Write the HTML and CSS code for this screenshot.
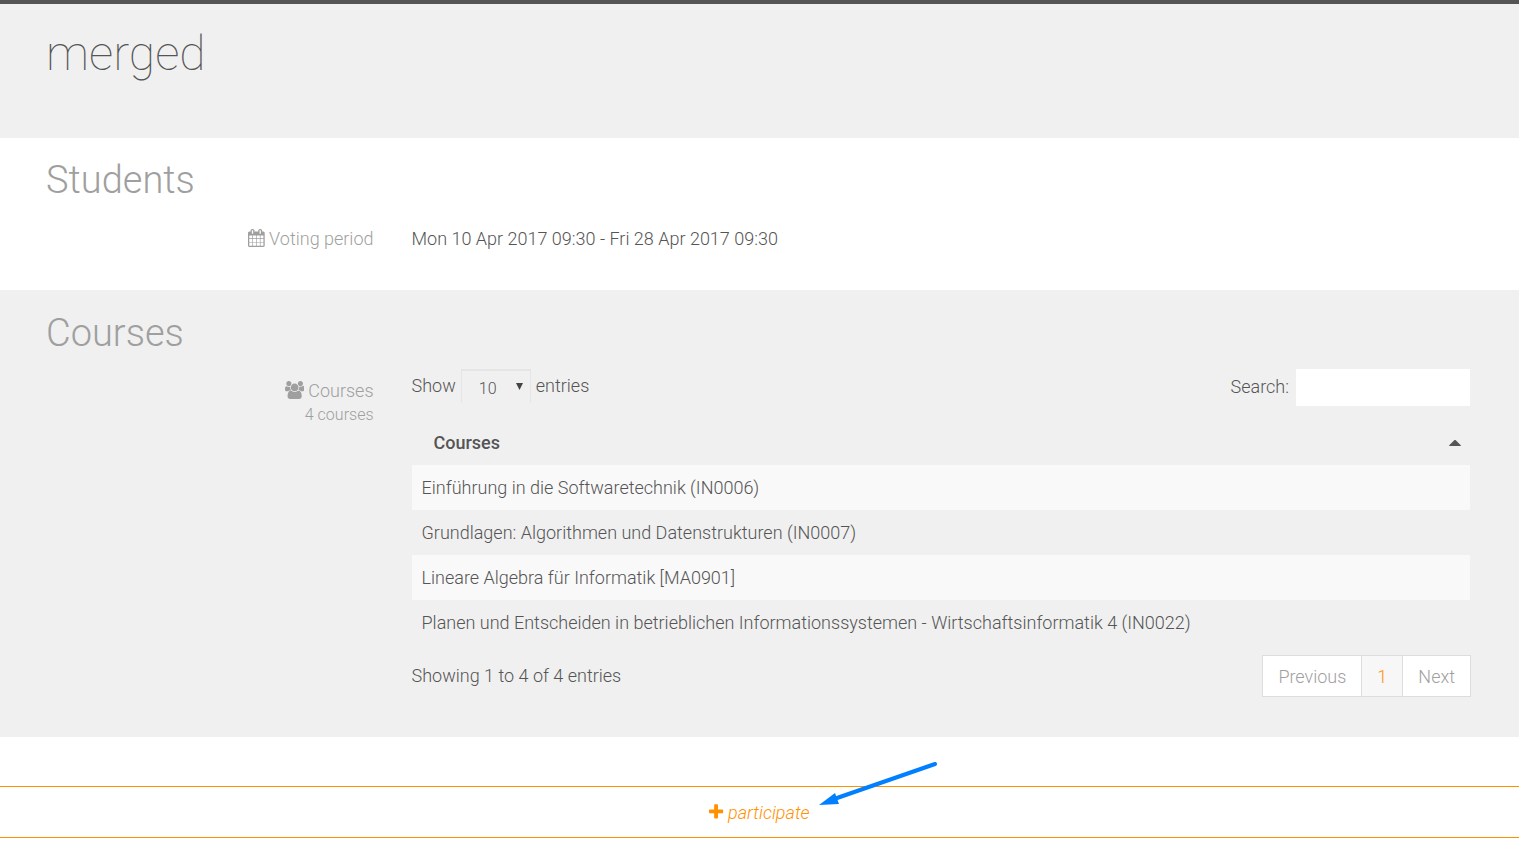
FILE: index.html
```html
<!DOCTYPE html>
<html lang="en">
<head>
<meta charset="utf-8">
<title>merged</title>
<link rel="stylesheet" href="styles.css">
</head>
<body>
<header class="masthead"><h1 class="title">merged</h1></header>
<main>
<section class="section students">
  <h2 class="heading">Students</h2>
  <div class="row">
    <div class="label"><svg class="icon cal" viewBox="64 0 1664 1792" aria-hidden="true"><path d="M192 1664h288v-288h-288v288zm352 0h320v-288h-320v288zm-352-352h288v-320h-288v320zm352 0h320v-320h-320v320zm-352-384h288v-288h-288v288zm736 736h320v-288h-320v288zm-384-736h320v-288h-320v288zm768 736h288v-288h-288v288zm-384-352h320v-320h-320v320zm-352-864v-288q0-13-9.500-22.500t-22.500-9.500h-64q-13 0-22.500 9.500t-9.500 22.500v288q0 13 9.500 22.500t22.500 9.500h64q13 0 22.500-9.500t9.500-22.500zm736 864h288v-320h-288v320zm-384-384h320v-288h-320v288zm384 0h288v-288h-288v288zm32-480v-288q0-13-9.500-22.500t-22.500-9.500h-64q-13 0-22.500 9.500t-9.500 22.500v288q0 13 9.500 22.500t22.500 9.500h64q13 0 22.500-9.500t9.500-22.500zm384-64v1280q0 52-38 90t-90 38h-1408q-52 0-90-38t-38-90v-1280q0-52 38-90t90-38h128v-96q0-66 47-113t113-47h64q66 0 113 47t47 113v96h384v-96q0-66 47-113t113-47h64q66 0 113 47t47 113v96h128q52 0 90 38t38 90z"/></svg> Voting period</div>
    <div class="value">Mon 10 Apr 2017 09:30 - Fri 28 Apr 2017 09:30</div>
  </div>
</section>
<section class="section courses">
  <h2 class="heading">Courses</h2>
  <div class="row">
    <div class="label label-courses"><svg class="icon users" viewBox="64 0 1920 1792" aria-hidden="true"><path d="M657 896q-162 5-265 128h-134q-82 0-138-40.500t-56-118.500q0-353 124-353 6 0 43.500 21t97.500 42.500 119 21.500q67 0 133-23-5 37-5 66 0 159 93 286zm1071 637q0 120-73 189.500t-194 69.500h-874q-121 0-194-69.500t-73-189.500q0-53 3.500-103.500t14-109 26.500-108.500 43-97.500 62-81 85.500-53.500 111.500-20q10 0 43 21.500t73 48 107 48 135 21.500 135-21.500 107-48 73-48 43-21.500q61 0 111.500 20t85.500 53.500 62 81 43 97.500 26.500 108.500 14 109 3.500 103.500zm-1024-1277q0 106-75 181t-181 75-181-75-75-181 75-181 181-75 181 75 75 181zm704 384q0 159-112.500 271.500t-271.500 112.500-271.500-112.500-112.500-271.500 112.500-271.500 271.500-112.500 271.500 112.500 112.500 271.500zm576 225q0 78-56 118.500t-138 40.500h-134q-103-123-265-128 93-127 93-286 0-29-5-66 66 23 133 23 59 0 119-21.500t97.500-42.500 43.500-21q124 0 124 353zm-128-609q0 106-75 181t-181 75-181-75-75-181 75-181 181-75 181 75 75 181z"/></svg> Courses<small class="count">4 courses</small></div>
    <div class="value">
      <div class="toolbar">
        <label class="length">Show
          <span class="select-wrap"><select class="select"><option>10</option><option>25</option><option>50</option></select><svg class="caret" viewBox="0 0 7 7" aria-hidden="true"><path d="M0 0h7L3.500 7z"/></svg></span>
          entries</label>
        <label class="search">Search: <input class="search-box" type="search"></label>
      </div>
      <table class="table">
        <thead><tr><th scope="col"><div class="sort">Courses <svg class="sort-icon" viewBox="0 0 12 6" aria-hidden="true"><path d="M.5 6L0 5.500L5.500 0h1L12 5.500L11.500 6z"/></svg></div></th></tr></thead>
        <tbody>
          <tr><td>Einführung in die Softwaretechnik (IN0006)</td></tr>
          <tr><td>Grundlagen: Algorithmen und Datenstrukturen (IN0007)</td></tr>
          <tr><td>Lineare Algebra für Informatik [MA0901]</td></tr>
          <tr><td>Planen und Entscheiden in betrieblichen Informationssystemen - Wirtschaftsinformatik 4 (IN0022)</td></tr>
        </tbody>
      </table>
      <div class="footer">
        <div class="info">Showing 1 to 4 of 4 entries</div>
        <nav class="pager" aria-label="Pages"><a class="page" href="#">Previous</a><a class="page current" href="#">1</a><a class="page" href="#">Next</a></nav>
      </div>
    </div>
  </div>
</section>
<div class="action">
  <a class="participate" href="#"><svg class="icon plus" viewBox="192 0 1408 1792" aria-hidden="true"><path d="M1600 736v192q0 40-28 68t-68 28h-416v416q0 40-28 68t-68 28h-192q-40 0-68-28t-28-68v-416h-416q-40 0-68-28t-28-68v-192q0-40 28-68t68-28h416v-416q0-40 28-68t68-28h192q40 0 68 28t28 68v416h416q40 0 68 28t28 68z"/></svg> <em>participate</em></a>
  <svg class="arrow" viewBox="0 0 120 46" aria-hidden="true"><path d="M116 4L18 38" fill="none" stroke="#0080ff" stroke-width="4" stroke-linecap="round"/><path d="M0 45L16 33L20 44z" fill="#0080ff"/></svg>
</div>
</main>
</body>
</html>
```
FILE: styles.css
```css
* { box-sizing: border-box; }
body {
  margin: 0;
  background: #fff;
  color: #555;
  font: 300 18px/24px Roboto, sans-serif;
}
h1, h2 { margin: 0; }
a { text-decoration: none; }
.masthead {
  border-top: 4px solid #555;
  background: #f0f0f0;
  padding: 22px 46px 56px;
}
.title { font-size: 48px; line-height: 56px; font-weight: 100; }
.section { padding: 20px 49px 40px 46px; }
.students { padding-bottom: 39px; }
.courses { background: #f0f0f0; padding-top: 21px; }
.heading {
  font-size: 38px;
  line-height: 44px;
  font-weight: 300;
  color: #9f9f9f;
  margin-bottom: 14px;
}
.students .heading { margin-bottom: 25px; }
.row {
  display: grid;
  grid-template-columns: 23% 1fr;
  column-gap: 38px;
}
.label { color: #9f9f9f; text-align: right; }
.label-courses { padding-top: 10px; }
.count { display: block; font-size: 16px; }
.icon { height: 18px; fill: currentColor; vertical-align: -2px; }
.toolbar, .footer { display: flex; justify-content: space-between; }
.toolbar { height: 52px; }
.length, .search { display: flex; align-items: center; height: 36px; gap: 5px; }
.length { height: 34px; }
.search { gap: 7px; }
.select-wrap { position: relative; display: flex; }
.select {
  appearance: none;
  width: 70px;
  height: 34px;
  padding: 4px 17px 0;
  border: 1px solid #e5e5e5;
  border-width: 2px 1px 0;
  background: transparent;
  color: #555;
  font: 300 16px/24px Roboto, sans-serif;
}
.caret { position: absolute; right: 8px; top: 14px; width: 7px; height: 7px; fill: #444; pointer-events: none; }
.search-box {
  width: 174px;
  height: 37px;
  border: 0;
  padding: 6px 12px;
  background: #fff;
  font: 300 16px/24px Roboto, sans-serif;
}
.table { width: 100%; border-collapse: collapse; }
.table th { padding: 10px 9px 10px 22px; font-weight: 500; text-align: left; }
.sort { display: flex; align-items: center; justify-content: space-between; }
.sort-icon { width: 12px; height: 6px; fill: #555; }
.table td { height: 45px; padding: 10px; }
.table tbody tr:nth-child(odd) { background: #f9f9f9; }
.footer { padding-top: 10px; }
.info { padding-top: 9px; }
.pager { display: flex; margin-right: -1px; }
.page {
  padding: 9px 15px 7px;
  border: 1px solid #ddd;
  margin-left: -1px;
  background: #fff;
  color: #9f9f9f;
}
.current { background: #f7f7f7; color: #ff9100; }
.action {
  position: relative;
  margin: 49px 0 16px;
  border: 1px solid #ff9100;
  border-width: 1px 0;
  text-align: center;
}
.participate { display: block; padding: 14px 0 12px; color: #ff9100; }
.arrow {
  position: absolute;
  left: calc(50% + 59px);
  bottom: 31px;
  width: 120px;
  height: 46px;
}
```
